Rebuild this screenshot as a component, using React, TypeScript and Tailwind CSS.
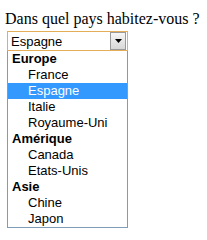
const groups = [
  { label: 'Europe', items: ['France', 'Espagne', 'Italie', 'Royaume-Uni'] },
  { label: 'Amérique', items: ['Canada', 'Etats-Unis'] },
  { label: 'Asie', items: ['Chine', 'Japon'] },
]

export default function App() {
  const selected = 'Espagne'
  return (
    <div className="w-[207px] h-[240px] bg-white pl-[5px] pt-[10px]">
      <p className="font-['Liberation_Serif',serif] text-[16px] leading-[18px] text-black whitespace-nowrap">
        Dans quel pays habitez-vous ?
      </p>
      <div className="ml-[2px] mt-[3px] w-[121px] font-['Liberation_Sans',Arial,sans-serif] text-[13px] text-black">
        <div className="h-[20px] border border-[#e3ae57] flex items-center justify-between pl-[3px] pr-[1px]">
          <span className="leading-[15px]">{selected}</span>
          <div className="w-[16px] h-[18px] border border-[#9a9a9a] bg-gradient-to-b from-[#f6f6f6] to-[#d8d8d8] flex items-center justify-center">
            <svg width="7" height="4" viewBox="0 0 7 4">
              <path d="M0 0H7L3.5 4Z" fill="#000" />
            </svg>
          </div>
        </div>
        <div className="border-x border-b border-[#7f9db9]">
          {groups.map((g) => (
            <div key={g.label}>
              <div className="h-[16px] leading-[16px] pl-[4px] font-bold">{g.label}</div>
              {g.items.map((item) => (
                <div
                  key={item}
                  className={
                    item === selected
                      ? 'h-[16px] leading-[16px] pl-[20px] bg-[#3399ff] text-white'
                      : 'h-[16px] leading-[16px] pl-[20px]'
                  }
                >
                  {item}
                </div>
              ))}
            </div>
          ))}
        </div>
      </div>
    </div>
  )
}
